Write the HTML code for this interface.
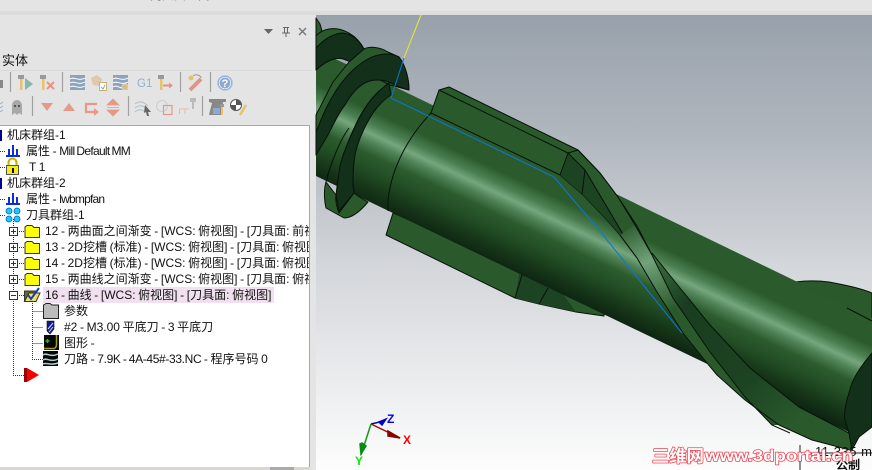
<!DOCTYPE html>
<html><head><meta charset="utf-8">
<style>
html,body{margin:0;padding:0;background:#e4e4e4}
#r{position:relative;width:872px;height:470px;overflow:hidden;background:#e4e4e4;font-family:"Liberation Sans","WenQuanYi Zen Hei","Noto Sans CJK SC",sans-serif}
.t{position:absolute;font-size:12px;line-height:16px;white-space:nowrap;color:#111;height:16px;word-spacing:-.7px}
svg{position:absolute;left:0;top:0}
</style></head><body><div id="r">
<div style="position:absolute;left:0;top:11px;width:872px;height:4px;background:#dcdcdc"></div>
<div style="position:absolute;left:150px;top:-11px;font-size:12px;color:#222;line-height:12px">两曲面之间</div>
<div class="t" style="left:2px;top:53px;font-size:13px">实体</div>
<div style="position:absolute;left:0;top:70px;width:312px;height:1px;background:#dadada"></div>
<div style="position:absolute;left:0;top:125px;width:310px;height:342px;background:#fff;border-top:1px solid #a8a8a8;border-right:1px solid #a8a8a8;box-sizing:border-box"></div>
<div style="position:absolute;left:0;top:467px;width:310px;height:3px;background:#d8d8d0"></div>
<div style="position:absolute;left:270px;top:467px;width:24px;height:3px;background:#aaa"></div>

<svg width="872" height="470" viewBox="0 0 872 470">
<defs>
<linearGradient id="bg" x1="0" y1="15" x2="0" y2="470" gradientUnits="userSpaceOnUse"><stop offset="0" stop-color="#98a1ab"/><stop offset=".25" stop-color="#afb5bd"/><stop offset=".55" stop-color="#d3d6da"/><stop offset="1" stop-color="#fdfdfd"/></linearGradient>
<linearGradient id="cy" x1="600" y1="188" x2="552" y2="290" gradientUnits="userSpaceOnUse"><stop offset="0" stop-color="#2b5b2d"/><stop offset=".24" stop-color="#2b5b2d"/><stop offset=".35" stop-color="#4a7e50"/><stop offset=".43" stop-color="#76a67e"/><stop offset=".5" stop-color="#4f8256"/><stop offset=".6" stop-color="#2c5c2e"/><stop offset=".72" stop-color="#234f26"/><stop offset=".88" stop-color="#163618"/><stop offset="1" stop-color="#0e2512"/></linearGradient>
<linearGradient id="st" x1="625" y1="225" x2="670" y2="310" gradientUnits="userSpaceOnUse"><stop offset="0" stop-color="#2a5a2c"/><stop offset=".45" stop-color="#72a27a"/><stop offset="1" stop-color="#2a5a2c"/></linearGradient>
<linearGradient id="dk" x1="655" y1="258" x2="800" y2="420" gradientUnits="userSpaceOnUse"><stop offset="0" stop-color="#3a6e40"/><stop offset=".25" stop-color="#1a3d20"/><stop offset=".7" stop-color="#1c4322"/><stop offset="1" stop-color="#2a5a2c"/></linearGradient>
<linearGradient id="fn" x1="590" y1="165" x2="640" y2="250" gradientUnits="userSpaceOnUse"><stop offset="0" stop-color="#2a5a2c"/><stop offset=".75" stop-color="#2a5a2c"/><stop offset="1" stop-color="#6a9a72"/></linearGradient>
</defs>
<rect x="316" y="15" width="556" height="455" fill="url(#bg)"/>
<g stroke="#071208" stroke-width="1" stroke-linejoin="round">
<!-- lower fin -->
<path d="M393,213 L386,235 L515,298 L539,304 L576,312 L604,316 L604,300Z" fill="#2a5a2c"/>
<path d="M520,270 L560,290 L576,312 L539,304 L515,298Z" fill="#1c4322" stroke="none"/>
<path d="M522,275 L515,298 M548,288 L539,304" fill="none"/>
<!-- right fin -->
<path d="M795,282 C810,280 822,281 829,282 C845,285 860,288 872,293 L872,321Z" fill="#2a5a2c"/>
<!-- rear piece -->
<path d="M316,18 L320,24 L322,31 L316,36Z" fill="#2a5a2c"/>
<!-- body -->
<path d="M316,50 L391,85 L872,318 L872,353 L849,393 L845,420 L849,432 L393,213 L316,176Z" fill="url(#cy)" stroke="none"/>
<path d="M795,282 L872,318" fill="none" stroke="#2a5a2c"/>
<path d="M847,308 L872,321" fill="none"/>
<!-- ring 1 -->
<path d="M316,36 C322,29 335,25 349,33 C356,37 361,43 364,49 L351,62 L346,60 C340,57 330,57 316,70Z" fill="#2a5a2c"/>
<path d="M316,48 C325,38 335,33 343,33 C352,34 358,39 364,49 L351,62 L346,60 C340,57 330,57 316,70Z" fill="#12301a"/>
<!-- ring 2 rim -->
<path d="M364,49 C370,46 380,47 388,52 L399,57 C406,66 409,80 409,90 L390,85 L360,70 L316,132 L316,115 L333,82 L349,62Z" fill="#2a5a2c"/>
<!-- ring 2 dark -->
<path d="M399,57 C395,55 392,54 388,54 C378,54 370,57 363,62 C348,72 335,88 323,115 L316,132 L316,155 L328,135 C333,125 339,112 345,105 C350,96 354,91 359,87 C366,81 372,80 378,80 C383,80 386,81 389,82 L399,87 L409,90 C409,80 406,66 399,57Z" fill="#12301a"/>
<!-- bottom flange -->
<path d="M326,182 C323,192 325,204 326,208 L344,218 C350,218 358,214 368,202 L361,198 L354,193 L353,185 L336,195Z" fill="#2a5a2c"/>
<path d="M336,195 C335,202 337,208 339,213 L354,193" fill="none"/>
<!-- ring 3 dark -->
<path d="M336,195 C338,178 339,170 341,162 C346,145 352,132 359,118 C365,107 371,99 378,92 C384,87 387,84 389,83 L391,95 C380,102 372,113 366,125 C360,137 355,150 354,162 C353,170 353,178 353,185 L354,193 L339,211Z" fill="#12301a"/>
<path d="M349,141 C355,125 365,105 376,94 M326,182 C330,165 340,140 349,128" fill="none"/>
<!-- seam -->
<path d="M431,113 C410,135 392,165 388,200 L388,211" fill="none"/>
<!-- upper fin -->
<path d="M431,113 L439,90 L449,87 L578,150 L600,173 L618,197 L637,226 L652,255 L637,258 L620,235 L607,220 L583,195 L560,175Z" fill="url(#fn)"/>
<path d="M568,153 L585,170 L607,207 L637,258 L620,235 L607,220 L583,195 L560,175Z" fill="#1c4322" stroke="none"/>
<path d="M439,90 L568,153 L578,150 M568,153 L560,175 M585,170 L582,194 M568,153 L585,170 L607,207 L637,258 M578,150 L600,173 L618,197 L635,225" fill="none"/>
<!-- strip A-B -->
<path d="M620,235 L635,225 L652,255 L673,298 L710,352 L728,375 L717,375 L707,363 L683,333 L657,292 L637,258Z" fill="url(#st)" stroke="none"/>
<!-- flat lower flute -->
<path d="M710,352 L680,288 L710,325 L750,368 L799,407 L849,433 L852,450 L812,440 L779,425 L745,400 L717,375Z" fill="#2a5a2c" stroke="none"/>
<!-- dark flute -->
<path d="M652,253 L680,288 L710,325 L750,368 L799,407 L849,433 L800,425 L772,425 L745,397 L728,375 L710,352 L673,298Z" fill="url(#dk)" stroke="none"/>
<!-- flute lines -->
<path d="M620,235 L637,258 L657,292 L683,333 L707,363 L717,375 L745,400 L779,425 L812,440 L850,450" fill="none"/>
<path d="M635,225 L652,255 L673,298 L710,352 L728,375 L745,397 L772,425 L790,433" fill="none"/>
<path d="M652,253 L680,288 L710,325 L750,368 L799,407 L849,433" fill="none"/>
<!-- end cap -->
<path d="M872,353 C862,365 852,378 849,393 C845,405 844,415 845,420 L849,433 L852,450 L859,437 L872,427Z" fill="#12301a"/>
</g>
<polyline points="421,15 404,58" fill="none" stroke="#f2ee20" stroke-width="1"/>
<polyline points="404,58 391,98 554,177 599,230 682,333" fill="none" stroke="#0a78d8" stroke-width="1"/>
<!-- axes -->
<g fill="none" stroke-width="1.5">
<path d="M371,424 L384,421" stroke="#0000c0"/><path d="M379,422 L386,419 L382,425Z" fill="#0000c0" stroke="#0000c0"/>
<path d="M371,424 L400,438" stroke="#a01010"/><path d="M388,431 L400,438 L388,436Z" fill="#8b0000" stroke="#8b0000"/>
<path d="M371,424 L361,455" stroke="#0c9c18"/><path d="M362,443 L366,446 L361,454 L360,444Z" fill="#0a8a14" stroke="#0a8a14"/>
</g>
<!-- scale -->
<path d="M800,445 V470 M800,453 H872" stroke="#222" stroke-width="1" fill="none"/>

<!-- tree lines -->
<g stroke="#333" stroke-width="1" stroke-dasharray="1 1" fill="none">
<path d="M0,151.5 H6 M0,167.5 H6 M0,199.5 H6 M0,215.5 H6"/>
<path d="M13.5,219 V375.5 H24"/>
<path d="M17,231.5 H24 M17,247.5 H24 M17,263.5 H24 M17,279.5 H24 M17,295.5 H24"/>
<path d="M32.5,303 V359.5 H43 M32.5,311.5 H43 M32.5,327.5 H43 M32.5,343.5 H43"/>
</g>
<g fill="#fff" stroke="#333"><rect x="9.5" y="227.5" width="8" height="8"/><rect x="9.5" y="243.5" width="8" height="8"/><rect x="9.5" y="259.5" width="8" height="8"/><rect x="9.5" y="275.5" width="8" height="8"/><rect x="9.5" y="291.5" width="8" height="8"/></g>
<path d="M11,231.5 H16 M13.5,229 V234 M11,247.5 H16 M13.5,245 V250 M11,263.5 H16 M13.5,261 V266 M11,279.5 H16 M13.5,277 V282 M11,295.5 H16" stroke="#333" fill="none"/>
<!-- blue bars -->
<rect x="0" y="130" width="2" height="11" fill="#00008b"/><rect x="0" y="178" width="2" height="11" fill="#00008b"/>
<g fill="#0a2fd8">
<path d="M6,155 H20 V157 H6Z M8,149 H10 V155 H8Z M12,145 H14 V155 H12Z M16,149 H18 V155 H16Z"/>
<path d="M6,203 H20 V205 H6Z M8,197 H10 V203 H8Z M12,193 H14 V203 H12Z M16,197 H18 V203 H16Z"/>
</g>
<!-- lock -->
<path d="M8.5,166 V163 C8.5,157 16.5,157 16.5,163 V166" fill="none" stroke="#c8b000" stroke-width="2"/>
<rect x="6.5" y="165.5" width="12" height="9" fill="#f6ea20" stroke="#555"/><path d="M12,168 h2 v5 h-2Z" fill="#111"/>
<!-- circles -->
<g fill="#12d0f5" stroke="#0a5ad0" stroke-width=".8"><circle cx="9" cy="211" r="3"/><circle cx="17" cy="211" r="3"/><circle cx="9" cy="219" r="3"/><circle cx="17" cy="219" r="3"/></g>
<!-- folders -->
<g fill="#ffff00" stroke="#333">
<path d="M25,237.5 V227 L27,225.5 H32 L34,227.5 H39.5 V237.5Z"/>
<path d="M25,253.5 V243 L27,241.5 H32 L34,243.5 H39.5 V253.5Z"/>
<path d="M25,269.5 V259 L27,257.5 H32 L34,259.5 H39.5 V269.5Z"/>
<path d="M25,285.5 V275 L27,273.5 H32 L34,275.5 H39.5 V285.5Z"/>
</g>
<rect x="43" y="287" width="231" height="16" fill="#f0e0f0"/>
<path d="M24.5,301.5 V291 H36 V301.5Z" fill="#6b6b10" stroke="#333"/><path d="M24.5,301.5 L29,293 H40 L36,301.5Z" fill="#f0e060" stroke="#333"/><path d="M28,295 L31,299 L39,288" stroke="#1040c0" stroke-width="2" fill="none"/>
<!-- params -->
<path d="M43.5,318.5 V305 L46,303.5 H50 L52,305 H58.5 V318.5Z" fill="#bbb" stroke="#222"/>
<path d="M47,321 L54,321 L54,329 L50,334 L47,331Z" fill="#0c1a90" stroke="#111" stroke-width=".6"/><path d="M48,329 L53,323 M49,332 L53,327" stroke="#dde" fill="none"/>
<rect x="44" y="335" width="15" height="15" fill="#050505"/><path d="M44,348.5 H54 C56,348 56.5,346 56.5,344 V335" stroke="#9aa020" stroke-width="1.5" fill="none"/><path d="M47.5,339 V343 M45.5,341 H49.5" stroke="#18c018" stroke-width="1.5"/>
<rect x="43" y="351" width="15" height="15" fill="#050505"/><path d="M43,355 C47,352 50,358 58,354 M43,360 C47,357 50,363 58,359 M43,364 C47,362 50,366 58,363" stroke="#a8d0d0" stroke-width="1.5" fill="none"/>
<path d="M24,368 H27 V382 H24Z" fill="#900"/><path d="M27,368 L39,375 L27,382Z" fill="#f40000"/>

<!-- panel header icons -->
<path d="M264,29 H273 L268.5,34Z" fill="#666"/>
<path d="M283,27.5 H289 M284.5,27.5 V33 H287.5 V27.5 M282,33 H290 M286,33 V37" stroke="#666" fill="none"/>
<path d="M299,28 L306,35 M306,28 L299,35" stroke="#777" stroke-width="1.4" fill="none"/>
<!-- separators -->
<g stroke="#a0a0a0" stroke-width="1.2"><path d="M10.5,72 V92 M62.5,72 V92 M180.5,72 V92 M210.5,72 V92 M32.5,96 V116 M128.5,96 V116 M202.5,96 V116"/></g>
<!-- toolbar row 1 -->
<path d="M0,80 H3 V88 H0Z" fill="#888"/>
<rect x="18" y="75" width="6" height="4" fill="#999"/><rect x="20" y="79" width="2.5" height="11" fill="#e6c368"/>
<path d="M25,78 L33,84 L25,90Z" fill="#86b8a8"/>
<rect x="40" y="75" width="6" height="4" fill="#999"/><rect x="42" y="79" width="2.5" height="11" fill="#e6c368"/>
<path d="M47,82 L54,89 M54,82 L47,89" stroke="#e09585" stroke-width="2" fill="none"/>
<rect x="70" y="75" width="15" height="15" fill="#8ca3bb"/><path d="M70,79 C74,76 78,82 85,78 M70,83 C74,80 78,86 85,82 M70,87 C74,84 78,90 85,86" stroke="#fff" fill="none"/>
<path d="M91,78 L97,75 L102,79 L100,86 L93,85Z" fill="#e0c8a8"/><rect x="99.5" y="82.5" width="7" height="8" fill="#fff" stroke="#c8b078"/><path d="M101,87 L103,89 L105,85" stroke="#8ab09a" fill="none"/>
<rect x="113" y="75" width="15" height="15" fill="#8ca3bb"/><path d="M113,79 C117,76 121,82 128,78 M113,83 C117,80 121,86 128,82 M113,87 C117,84 121,90 124,87" stroke="#fff" fill="none"/><circle cx="125" cy="87" r="3.2" fill="#d8bc80" stroke="#e4e4e4" stroke-width=".6"/>
<text x="137" y="87" font-size="11.5" fill="#8fb0d4" font-family="Liberation Sans">G1</text>
<rect x="158" y="75" width="6" height="4" fill="#999"/><rect x="160" y="79" width="2.5" height="11" fill="#e6c368"/><path d="M163,85.5 H170" stroke="#e09585" stroke-width="2"/><path d="M169,82.5 L173,85.5 L169,88.5Z" fill="#e09585"/>
<circle cx="191" cy="78" r="2.5" fill="#e6c368"/><path d="M190,90 L201,79" stroke="#e09585" stroke-width="4" fill="none"/><path d="M193,76 C196,73 201,76 201,78" stroke="#999" fill="none"/>
<circle cx="225" cy="83" r="7.5" fill="#8cabd0" stroke="#b8cce0"/><circle cx="225" cy="83" r="5.8" fill="none" stroke="#fff" stroke-width=".7"/><text x="225" y="87" font-size="11" font-weight="bold" fill="#fff" text-anchor="middle" font-family="Liberation Sans">?</text>
<!-- toolbar row 2 -->
<path d="M0,104 L3,102 M0,108 L3,106 M0,112 L3,110" stroke="#9cb0c8" fill="none"/>
<path d="M12,115 V106 C12,98 22,98 22,106 V115 L19,113 L17,115 L15,113Z" fill="#a8a8a8"/><rect x="14" y="105" width="2" height="2" fill="#555"/><rect x="18" y="105" width="2" height="2" fill="#555"/>
<path d="M41,103 H53 L47,111Z" fill="#e49a88"/>
<path d="M63,111 H75 L69,103Z" fill="#e49a88"/>
<path d="M97,104 H86 V112 H94" fill="none" stroke="#e49a88" stroke-width="2.2"/><path d="M94,108 L99,112 L94,116Z" fill="#e49a88"/>
<path d="M113,99 L119,105 H107Z M107,107.5 H119 M107,110 H119 L113,116Z" fill="#e49a88" stroke="#e49a88" stroke-width=".8"/>
<path d="M135,104 C140,100 144,102 148,106 M135,108 C140,104 144,106 147,109 M135,112 C138,109 142,109 145,112" stroke="#b0c0c8" fill="none"/><path d="M145,105 L151,112 L148,112 L149,116 L147,116 L146,112 L144,113Z" fill="#666"/>
<circle cx="162" cy="106" r="5.5" fill="none" stroke="#ccc"/><rect x="163.5" y="105.5" width="8.5" height="9" fill="none" stroke="#e49a88" stroke-width="1.2"/>
<rect x="190" y="98" width="6" height="4" fill="#bbb"/><rect x="192" y="102" width="2" height="7" fill="#bbb"/><path d="M179.5,114 V109 H189 M185,109 V114" stroke="#e0c098" fill="none"/>
<path d="M209,99 H226 V102 H223 L222,115 H209 L212,103 L209,102Z" fill="#888"/><rect x="213" y="108" width="7" height="6" fill="#8cabd0"/><rect x="220" y="104" width="4" height="3" fill="#999"/><rect x="221" y="107" width="2" height="8" fill="#e6c368"/>
<circle cx="236" cy="105" r="5.5" fill="#fff" stroke="#555"/><path d="M236,105 V99.5 A5.5,5.5 0 0 1 241.5,105Z M236,105 V110.5 A5.5,5.5 0 0 1 230.5,105Z" fill="#555"/><path d="M240,115 L246,105" stroke="#e6c368" stroke-width="2.4"/>

<!-- axis labels -->
<text x="387" y="423" font-size="12" font-weight="bold" fill="#0000ff" font-family="Liberation Sans">Z</text>
<text x="403" y="444" font-size="12" font-weight="bold" fill="#ff0000" font-family="Liberation Sans">X</text>
<text x="355" y="465" font-size="12" font-weight="bold" fill="#00ee00" font-family="Liberation Sans">Y</text>
<!-- scale text -->
<text x="815" y="456" font-size="13" fill="#111" font-family="Liberation Sans" textLength="57">11.335 m</text>
<text x="836" y="469" font-size="12" font-weight="bold" fill="#111" font-family="Liberation Sans,WenQuanYi Zen Hei,sans-serif">公制</text>
<!-- watermark -->
<g font-weight="bold" fill="#fff" stroke="#ee4450" stroke-width="1.5" paint-order="stroke" stroke-linejoin="round">
<text x="652" y="462" font-size="17" font-family="Liberation Sans,Noto Sans CJK SC,sans-serif" textLength="52" lengthAdjust="spacingAndGlyphs">三维网</text>
<text x="705" y="461" font-size="16" font-family="Liberation Sans,sans-serif" textLength="148" lengthAdjust="spacingAndGlyphs">www.3dportal.cn</text>
</g>
</svg>

<div class="t" style="left:7px;top:127px">机床群组-1</div>
<div class="t" style="left:26px;top:143px">属性 - <span style="letter-spacing:-.7px">Mill Default MM</span></div>
<div class="t" style="left:29px;top:159px">T 1</div>
<div class="t" style="left:7px;top:175px">机床群组-2</div>
<div class="t" style="left:26px;top:191px">属性 - <span style="letter-spacing:-.8px">lwbmpfan</span></div>
<div class="t" style="left:26px;top:207px">刀具群组-1</div>
<div style="position:absolute;left:0;top:223px;width:309px;height:80px;overflow:hidden">
<div class="t" style="left:45px;top:0">12 - 两曲面之间渐变 - [WCS: 俯视图] - [刀具面: 前视图]</div>
<div class="t" style="left:45px;top:16px">13 - 2D挖槽 (标准) - [WCS: 俯视图] - [刀具面: 俯视图]</div>
<div class="t" style="left:45px;top:32px">14 - 2D挖槽 (标准) - [WCS: 俯视图] - [刀具面: 俯视图]</div>
<div class="t" style="left:45px;top:48px">15 - 两曲线之间渐变 - [WCS: 俯视图] - [刀具面: 俯视图]</div>
<div class="t" style="left:45px;top:64px">16 - 曲线 - [WCS: 俯视图] - [刀具面: 俯视图]</div>
</div>
<div class="t" style="left:64px;top:303px">参数</div>
<div class="t" style="left:64px;top:319px">#2 - M3.00 平底刀 - 3 平底刀</div>
<div class="t" style="left:64px;top:335px">图形 -</div>
<div class="t" style="left:64px;top:351px">刀路 - <span style="letter-spacing:-.35px">7.9K - 4A-45#-33.NC</span> - 程序号码 0</div>
</div></body></html>
